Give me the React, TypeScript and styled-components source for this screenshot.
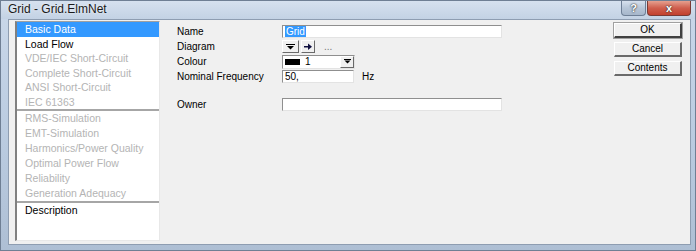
import styled, { createGlobalStyle } from "styled-components";

const GlobalStyle = createGlobalStyle`
  html, body {
    margin: 0;
    padding: 0;
    background: #ffffff;
  }
  * {
    box-sizing: border-box;
  }
`;

const Window = styled.div`
  width: 696px;
  height: 251px;
  display: flex;
  flex-direction: column;
  background: linear-gradient(to bottom, #cad8ea 0%, #b9cadf 60%, #aebfd4 100%);
  border: 1px solid #6f7f94;
  font-family: "Liberation Sans", Arial, sans-serif;
  overflow: hidden;
`;

const TitleBar = styled.div`
  height: 18px;
  display: flex;
  align-items: flex-start;
  padding-left: 7px;
  background: linear-gradient(to bottom, #d6e1ef 0%, #c3d2e4 100%);
`;

const Title = styled.div`
  flex: 1;
  font-size: 12px;
  line-height: 17px;
  color: #1a1a1a;
  text-shadow: 0 0 3px rgba(255, 255, 255, 0.9);
`;

const CaptionButton = styled.div<{ $close?: boolean }>`
  width: ${(p) => (p.$close ? "44px" : "25px")};
  height: 15px;
  margin-right: ${(p) => (p.$close ? "4px" : "1px")};
  display: flex;
  align-items: center;
  justify-content: center;
  border: 1px solid ${(p) => (p.$close ? "#7a3a34" : "#6e7f96")};
  border-top: none;
  border-radius: 0 0 4px 4px;
  background: ${(p) =>
    p.$close
      ? "linear-gradient(to bottom, #e6a08f 0%, #cf5f4e 50%, #c2402e 100%)"
      : "linear-gradient(to bottom, #d7e1ee 0%, #b7c6d8 50%, #a7b7cb 100%)"};
  color: #fff;
  font-size: 11px;
  font-weight: bold;
  text-shadow: 0 0 2px #333, 0 0 1px #333;
`;

const Client = styled.div`
  flex: 1;
  margin: 0 4px 5px 7px;
  background: #f0f0f0;
  border: 1px solid #8e9db1;
  display: flex;
  padding: 1px 8px 3px 6px;
`;

const NavList = styled.div`
  width: 145px;
  background: #ffffff;
  border-style: solid;
  border-width: 1px 1px 1px 2px;
  border-color: #a0a0a0 #e8e8e8 #e8e8e8 #808080;
  display: flex;
  flex-direction: column;
`;

const NavGroup = styled.div`
  border-bottom: 2px solid #a6a6a6;
`;

const NavItem = styled.div<{ $state?: "active" | "enabled" | "disabled"; $compact?: boolean }>`
  height: ${(p) => (p.$compact ? "14.5px" : "15px")};
  line-height: ${(p) => (p.$compact ? "14.5px" : "15px")};
  padding-left: 8px;
  font-size: 10.5px;
  white-space: nowrap;
  background: ${(p) => (p.$state === "active" ? "#3399ff" : "transparent")};
  color: ${(p) =>
    p.$state === "active" ? "#ffffff" : p.$state === "disabled" ? "#b4b4b4" : "#000000"};
`;

const Form = styled.div`
  flex: 1;
  padding: 3px 0 0 17px;
  display: grid;
  grid-template-columns: 105px auto;
  grid-template-rows: 15px 15px 15px 15px 13px 15px;
  align-content: start;
  align-items: center;
  font-size: 10px;
  color: #000;
`;

const Label = styled.div`
  white-space: nowrap;
`;

const Field = styled.div`
  display: flex;
  align-items: center;
`;

const TextBox = styled.div<{ $width: number }>`
  width: ${(p) => p.$width}px;
  height: 13px;
  background: #ffffff;
  border-style: solid;
  border-width: 1px;
  border-color: #8f8f8f #e3e3e3 #e3e3e3 #8f8f8f;
  font-size: 10px;
  line-height: 11px;
  padding-left: 2px;
  display: flex;
  align-items: center;
`;

const Selected = styled.span`
  background: #3399ff;
  color: #fff;
  padding: 0 1px;
  line-height: 11px;
`;

const SmallButton = styled.div<{ $width: number }>`
  width: ${(p) => p.$width}px;
  height: 13px;
  margin-right: 2px;
  background: #f0f0f0;
  border-style: solid;
  border-width: 1px;
  border-color: #ffffff #6a6a6a #6a6a6a #ffffff;
  display: flex;
  align-items: center;
  justify-content: center;
`;

const Ellipsis = styled.span`
  margin-left: 7px;
  color: #777;
  font-size: 10px;
`;

const Combo = styled.div`
  width: 73px;
  height: 14px;
  background: #ffffff;
  border-style: solid;
  border-width: 1px;
  border-color: #8f8f8f #e3e3e3 #e3e3e3 #8f8f8f;
  display: flex;
  align-items: center;
  padding-left: 2px;
`;

const Swatch = styled.span`
  width: 15px;
  height: 6px;
  background: #000;
  margin-right: 5px;
`;

const ComboText = styled.span`
  flex: 1;
  font-size: 10px;
`;

const ComboArrow = styled.div`
  width: 14px;
  height: 12px;
  background: #f0f0f0;
  border-style: solid;
  border-width: 1px;
  border-color: #ffffff #6a6a6a #6a6a6a #ffffff;
  display: flex;
  align-items: center;
  justify-content: center;
`;

const Unit = styled.span`
  margin-left: 8px;
`;

const ButtonColumn = styled.div`
  width: 68px;
  padding-top: 2px;
  display: flex;
  flex-direction: column;
  gap: 4px;
`;

const DialogButton = styled.div<{ $default?: boolean }>`
  height: 15px;
  background: #f0f0f0;
  border-style: solid;
  border-width: 1px 2px 2px 1px;
  border-color: ${(p) =>
    p.$default ? "#ffffff #404040 #404040 #ffffff" : "#ffffff #6a6a6a #6a6a6a #ffffff"};
  box-shadow: ${(p) => (p.$default ? "0 0 0 1px #a0a0a0" : "none")};
  font-size: 10px;
  line-height: 12px;
  text-align: center;
  color: #000;
`;

const DownArrow = () => (
  <svg width="9" height="6" viewBox="0 0 9 6">
    <rect x="0" y="0" width="9" height="1" fill="#000" />
    <polygon points="1,2 8,2 4.5,5.5" fill="#000" />
  </svg>
);

const RightArrow = () => (
  <svg width="8" height="7" viewBox="0 0 8 7">
    <rect x="0" y="3" width="4" height="1.5" fill="#101040" />
    <polygon points="4,0.5 8,3.7 4,7" fill="#101040" />
  </svg>
);

const ComboDown = () => (
  <svg width="7" height="5" viewBox="0 0 7 5">
    <rect x="0" y="0" width="7" height="1" fill="#000" />
    <polygon points="0.5,1.5 6.5,1.5 3.5,4.5" fill="#000" />
  </svg>
);

const firstGroup: [string, "active" | "enabled" | "disabled"][] = [
  ["Basic Data", "active"],
  ["Load Flow", "enabled"],
  ["VDE/IEC Short-Circuit", "disabled"],
  ["Complete Short-Circuit", "disabled"],
  ["ANSI Short-Circuit", "disabled"],
  ["IEC 61363", "disabled"],
];

const secondGroup = [
  "RMS-Simulation",
  "EMT-Simulation",
  "Harmonics/Power Quality",
  "Optimal Power Flow",
  "Reliability",
  "Generation Adequacy",
];

export default function App() {
  return (
    <>
      <GlobalStyle />
      <Window>
        <TitleBar>
          <Title>Grid - Grid.ElmNet</Title>
          <CaptionButton>?</CaptionButton>
          <CaptionButton $close>x</CaptionButton>
        </TitleBar>
        <Client>
          <NavList>
            <NavGroup>
              {firstGroup.map(([name, state]) => (
                <NavItem key={name} $state={state} $compact>
                  {name}
                </NavItem>
              ))}
            </NavGroup>
            <NavGroup>
              {secondGroup.map((name) => (
                <NavItem key={name} $state="disabled">
                  {name}
                </NavItem>
              ))}
            </NavGroup>
            <NavItem $state="enabled">Description</NavItem>
          </NavList>

          <Form>
            <Label>Name</Label>
            <Field>
              <TextBox $width={220}>
                <Selected>Grid</Selected>
              </TextBox>
            </Field>

            <Label>Diagram</Label>
            <Field>
              <SmallButton $width={17}>
                <DownArrow />
              </SmallButton>
              <SmallButton $width={14}>
                <RightArrow />
              </SmallButton>
              <Ellipsis>...</Ellipsis>
            </Field>

            <Label>Colour</Label>
            <Field>
              <Combo>
                <Swatch />
                <ComboText>1</ComboText>
                <ComboArrow>
                  <ComboDown />
                </ComboArrow>
              </Combo>
            </Field>

            <Label>Nominal Frequency</Label>
            <Field>
              <TextBox $width={72}>50,</TextBox>
              <Unit>Hz</Unit>
            </Field>

            <div />
            <div />

            <Label>Owner</Label>
            <Field>
              <TextBox $width={220} />
            </Field>
          </Form>

          <ButtonColumn>
            <DialogButton $default>OK</DialogButton>
            <DialogButton>Cancel</DialogButton>
            <DialogButton>Contents</DialogButton>
          </ButtonColumn>
        </Client>
      </Window>
    </>
  );
}
